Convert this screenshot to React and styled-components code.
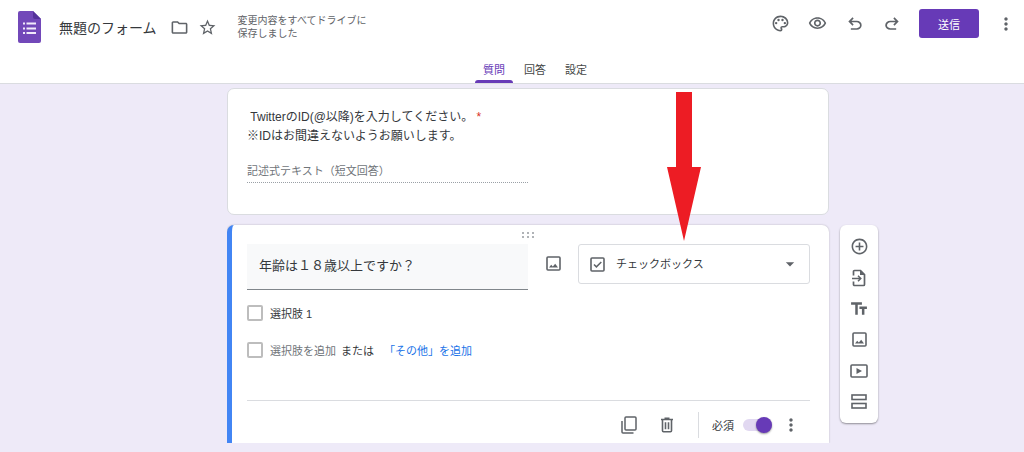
import { useState } from "react"
import styled, { createGlobalStyle } from "styled-components"
import {
    MdAddCircleOutline,
    MdArrowDropDown,
    MdMoreVert,
    MdOutlineFolder,
    MdOutlinePalette,
    MdOutlineVisibility,
    MdStarBorder,
    MdTextFields,
} from "react-icons/md"

const tabs = ["質問", "回答", "設定"]
const questionTypes = ["チェックボックス", "ラジオボタン", "プルダウン", "記述式"]

const UndoIcon = () => (
    <svg width="20" height="20" viewBox="0 -960 960 960" fill="currentColor" aria-hidden="true">
        <path d="M280-200v-80h284q63 0 109.500-40T720-420q0-60-46.500-100T564-560H312l104 104-56 56-200-200 200-200 56 56-104 104h252q97 0 169.500 63T800-420q0 94-72.500 157T564-200H280Z" />
    </svg>
)

const RedoIcon = () => (
    <svg width="20" height="20" viewBox="0 -960 960 960" fill="currentColor" aria-hidden="true">
        <path d="M396-200q-97 0-169.500-63T154-420q0-94 72.500-157T396-640h252L544-744l56-56 200 200-200 200-56-56 104-104H396q-63 0-109.500 40T240-420q0 60 46.500 100T396-280h284v80H396Z" />
    </svg>
)

const FormLogo = () => (
    <svg width="23" height="32" viewBox="0 0 23 32" aria-hidden="true">
        <path d="M2 0h13l8 8v22a2 2 0 0 1-2 2H2a2 2 0 0 1-2-2V2a2 2 0 0 1 2-2z" fill="#7248b9" />
        <path d="M15 0l8 8h-6a2 2 0 0 1-2-2z" fill="#54329a" />
        <path d="M8.500 12.500H18M8.500 17.500H18M8.500 22H18" stroke="#f1ebfb" strokeWidth="2" />
        <path d="M5 12.500h2M5 17.500h2M5 22h2" stroke="#f1ebfb" strokeWidth="2" />
    </svg>
)

const ImageIcon = () => (
    <svg width="15" height="15" viewBox="0 0 15 15" aria-hidden="true">
        <rect x="1" y="1" width="13" height="13" rx="1" fill="none" stroke="currentColor" strokeWidth="1.600" />
        <path d="M3 11.500l2.200-2.800 1.600 1.700 2.400-2.600 2.800 3.700z" fill="currentColor" />
    </svg>
)

const CheckBoxIcon = () => (
    <svg width="15" height="15" viewBox="0 0 15 15" fill="none" stroke="currentColor" aria-hidden="true">
        <rect x="1" y="1" width="13" height="13" rx="1" strokeWidth="1.600" />
        <path d="M4 7.500l2.400 2.400L11.300 5" strokeWidth="1.500" />
    </svg>
)

const ImportIcon = () => (
    <svg width="16" height="18" viewBox="0 0 16 18" fill="none" stroke="currentColor" aria-hidden="true">
        <path d="M2.500 6.500V2.500a1 1 0 0 1 1-1h6l4 4v10a1 1 0 0 1-1 1h-9a1 1 0 0 1-1-1V12.500" strokeWidth="1.700" />
        <path d="M9 1l5 5h-5z" fill="currentColor" stroke="none" />
        <path d="M1 9.500h8.500M7 6.700l2.800 2.800L7 12.300" strokeWidth="1.500" />
    </svg>
)

const VideoIcon = () => (
    <svg width="18" height="14" viewBox="0 0 18 14" aria-hidden="true">
        <rect x="1" y="1" width="16" height="12" rx="1" fill="none" stroke="currentColor" strokeWidth="1.600" />
        <path d="M6.500 4l5.500 3-5.500 3z" fill="currentColor" />
    </svg>
)

const SectionIcon = () => (
    <svg width="16" height="15" viewBox="0 0 16 15" fill="none" stroke="currentColor" strokeWidth="1.600" aria-hidden="true">
        <rect x="1" y="1" width="14" height="4.500" />
        <rect x="1" y="9.500" width="14" height="4.500" />
    </svg>
)

const CopyIcon = () => (
    <svg width="16" height="18" viewBox="0 0 16 18" fill="none" stroke="currentColor" strokeWidth="1.500" aria-hidden="true">
        <rect x="4" y="1" width="11" height="13" rx="1" />
        <path d="M1 5v11a1 1 0 0 0 1 1h10.500" />
    </svg>
)

const TrashIcon = () => (
    <svg width="14" height="16" viewBox="0 0 14 16" fill="none" stroke="currentColor" strokeWidth="1.600" aria-hidden="true">
        <path d="M1 2.500h12M4.500 1.200h5" />
        <path d="M2.500 2.500v11.200a1 1 0 0 0 1 1h7a1 1 0 0 0 1-1V2.500M5.500 5.200v7M8.500 5.200v7" />
    </svg>
)

const DragDots = () => (
    <svg width="13" height="7" viewBox="0 0 13 7" fill="#b0b3b7" aria-hidden="true">
        {[0, 5, 10].map(x => (
            <path key={x} d={`M${x} 0h2v2h-2zM${x} 4h2v2h-2z`} />
        ))}
    </svg>
)

const Header = () => {
    const [active, setActive] = useState(tabs[0])
    return (
        <StyledHeader>
            <TopRow>
                <TitleGroup>
                    <FormLogo />
                    <FormTitle>無題のフォーム</FormTitle>
                    <SmallButton aria-label="フォルダに移動"><MdOutlineFolder size={19} /></SmallButton>
                    <SmallButton aria-label="スターを付ける"><MdStarBorder size={19} /></SmallButton>
                    <SaveStatus>変更内容をすべてドライブに保存しました</SaveStatus>
                </TitleGroup>
                <Actions>
                    <IconButton aria-label="テーマをカスタマイズ"><MdOutlinePalette size={19} /></IconButton>
                    <IconButton aria-label="プレビュー"><MdOutlineVisibility size={19} /></IconButton>
                    <IconButton aria-label="元に戻す"><UndoIcon /></IconButton>
                    <IconButton aria-label="やり直す"><RedoIcon /></IconButton>
                    <SendButton>送信</SendButton>
                    <IconButton aria-label="その他"><MdMoreVert size={20} /></IconButton>
                </Actions>
            </TopRow>
            <TabBar role="tablist">
                {tabs.map(tab => (
                    <Tab key={tab} role="tab" aria-selected={tab === active} onClick={() => setActive(tab)}>
                        {tab}
                    </Tab>
                ))}
            </TabBar>
        </StyledHeader>
    )
}

const TextQuestion = () => (
    <Card>
        <QuestionText htmlFor="twitter-id">
            &nbsp;TwitterのID(@以降)を入力してください。 <Required>*</Required>
            <br />
            ※IDはお間違えないようお願いします。
        </QuestionText>
        <ShortAnswer id="twitter-id" type="text" value="記述式テキスト（短文回答）" readOnly />
    </Card>
)

const CheckboxQuestion = () => {
    const [title, setTitle] = useState("年齢は１８歳以上ですか？")
    const [type, setType] = useState(questionTypes[0])
    const [required, setRequired] = useState(true)
    return (
        <ActiveCard>
            <DragHandle><DragDots /></DragHandle>
            <QuestionRow>
                <TitleInput aria-label="質問" value={title} onChange={e => setTitle(e.target.value)} />
                <ImageButton aria-label="画像を追加"><ImageIcon /></ImageButton>
                <TypeSelect>
                    <CheckBoxIcon />
                    <select aria-label="質問の種類" value={type} onChange={e => setType(e.target.value)}>
                        {questionTypes.map(item => (
                            <option key={item}>{item}</option>
                        ))}
                    </select>
                    <MdArrowDropDown size={20} />
                    <Pointer width="34" height="150" viewBox="0 0 34 150" aria-hidden="true">
                        <path d="M9 1h16v75h9l-17 74-17-74h9z" fill="#ed1c24" />
                    </Pointer>
                </TypeSelect>
            </QuestionRow>
            <Option>
                <input id="option-1" type="checkbox" />
                <label htmlFor="option-1">選択肢 1</label>
            </Option>
            <Option>
                <input type="checkbox" aria-label="新しい選択肢" />
                <AddOption>選択肢を追加</AddOption>
                <span>または</span>
                <AddOther>「その他」を追加</AddOther>
            </Option>
            <CardFooter>
                <IconButton $wide aria-label="コピーを作成"><CopyIcon /></IconButton>
                <IconButton $wide aria-label="削除"><TrashIcon /></IconButton>
                <RequiredToggle>
                    必須
                    <input type="checkbox" role="switch" checked={required} onChange={e => setRequired(e.target.checked)} />
                </RequiredToggle>
                <IconButton $wide aria-label="その他のオプション"><MdMoreVert size={20} /></IconButton>
            </CardFooter>
        </ActiveCard>
    )
}

const SideToolbar = () => (
    <StyledToolbar>
        <button aria-label="質問を追加"><MdAddCircleOutline size={19} /></button>
        <button aria-label="質問をインポート"><ImportIcon /></button>
        <button aria-label="タイトルと説明を追加"><MdTextFields size={20} /></button>
        <button aria-label="画像を追加"><ImageIcon /></button>
        <button aria-label="動画を追加"><VideoIcon /></button>
        <button aria-label="セクションを追加"><SectionIcon /></button>
    </StyledToolbar>
)

const App = () => (
    <>
        <GlobalStyle />
        <Header />
        <Editor>
            <TextQuestion />
            <CheckboxQuestion />
            <SideToolbar />
        </Editor>
    </>
)

export default App

const GlobalStyle = createGlobalStyle`
    * {
        box-sizing: border-box;
    }
    body {
        margin: 0;
        background: #eeeaf8;
        color: #35383c;
        font-family: "Liberation Sans", "Noto Sans CJK JP", sans-serif;
        font-size: 11px;
    }
    button, input, select {
        font: inherit;
        color: inherit;
    }
    button {
        padding: 0;
        border: none;
        background: none;
        cursor: pointer;
    }
    svg {
        display: block;
        flex-shrink: 0;
    }
`

const StyledHeader = styled.header`
    background: #fff;
    border-bottom: 1px solid #dadce0;
`

const TopRow = styled.div`
    display: flex;
    justify-content: space-between;
    align-items: flex-start;
    height: 54px;
`

const TitleGroup = styled.div`
    display: flex;
    align-items: center;
    height: 54px;
    padding-left: 18px;
`

const FormTitle = styled.h1`
    margin: 0 9px 0 18px;
    font-size: 14px;
    font-weight: 400;
    white-space: nowrap;
`

const SmallButton = styled.button`
    display: grid;
    place-items: center;
    width: 28px;
    height: 28px;
    color: #5f6368;
`

const SaveStatus = styled.p`
    width: 132px;
    margin: 0 0 0 16px;
    font-size: 10px;
    line-height: 13px;
    color: #5f6368;
`

const Actions = styled.div`
    display: flex;
    align-items: center;
    height: 47px;
`

const IconButton = styled.button`
    display: grid;
    place-items: center;
    width: ${props => props.$wide ? "38px" : "37px"};
    height: 36px;
    color: #5f6368;
`

const SendButton = styled.button`
    width: 60px;
    height: 29px;
    margin: 0 8px 0 9px;
    border-radius: 3px;
    background: #673ab7;
    color: #fff;
`

const TabBar = styled.div`
    display: flex;
    justify-content: center;
    gap: 3px;
    height: 29px;
    padding-left: 46px;
`

const Tab = styled.button`
    position: relative;
    padding: 0 8px;
    color: #444746;
    &[aria-selected="true"] {
        color: #673ab7;
    }
    &[aria-selected="true"]::after {
        content: '';
        position: absolute;
        inset: auto 0 0;
        height: 3px;
        border-radius: 3px 3px 0 0;
        background: #673ab7;
    }
`

const Editor = styled.main`
    display: grid;
    grid-template-columns: minmax(0, 602px) 38px;
    justify-content: center;
    gap: 10px 11px;
    padding: 4px 0 9px 81px;
`

const Card = styled.section`
    padding: 19px 19px 31px;
    border: 1px solid #dadce0;
    border-radius: 7px;
    background: #fff;
`

const QuestionText = styled.label`
    display: block;
    font-size: 12px;
    line-height: 19px;
`

const Required = styled.span`
    color: #d93025;
`

const ShortAnswer = styled.input`
    display: block;
    width: 50%;
    height: 22px;
    margin-top: 15px;
    padding: 0 0 4px;
    border: none;
    border-bottom: 1px dotted #9aa0a6;
    background: none;
    color: #70757a;
`

const ActiveCard = styled.section`
    grid-column: 1;
    padding: 0 19px 0 15px;
    border-left: 5px solid #4285f4;
    border-radius: 7px 7px 0 0;
    background: #fff;
    box-shadow: 0 0 2px rgba(0, 0, 0, 0.25);
    clip-path: inset(-150px -3px 0 0);
`

const DragHandle = styled.div`
    display: flex;
    justify-content: center;
    height: 19px;
    padding-top: 7px;
`

const QuestionRow = styled.div`
    display: flex;
    align-items: flex-start;
    margin-bottom: 4px;
`

const TitleInput = styled.input`
    flex: 1;
    min-width: 0;
    height: 46px;
    padding: 0 12px 4px;
    border: none;
    border-bottom: 1px solid #80868b;
    background: #f8f9fa;
    font-size: 13px;
`

const ImageButton = styled.button`
    display: grid;
    place-items: center;
    width: 50px;
    height: 38px;
    color: #5f6368;
`

const TypeSelect = styled.div`
    position: relative;
    display: flex;
    align-items: center;
    width: 232px;
    height: 40px;
    padding: 0 9px 0 11px;
    border: 1px solid #dadce0;
    border-radius: 3px;
    color: #5f6368;
    select {
        flex: 1;
        min-width: 0;
        height: 100%;
        padding: 0 0 0 11px;
        border: none;
        appearance: none;
        background: none;
        color: #35383c;
    }
`

const Pointer = styled.svg`
    position: absolute;
    left: 88px;
    bottom: calc(100% + 4px);
    pointer-events: none;
`

const Option = styled.div`
    display: flex;
    align-items: center;
    gap: 5px;
    height: 37px;
    input {
        appearance: none;
        width: 16px;
        height: 16px;
        margin: 0 2px 0 0;
        border: 2px solid #bdbdbd;
        border-radius: 2px;
    }
    input:checked {
        background: #673ab7;
    }
`

const AddOption = styled.button`
    color: #70757a;
`

const AddOther = styled.button`
    margin-left: 5px;
    color: #1a73e8;
`

const CardFooter = styled.footer`
    display: flex;
    justify-content: flex-end;
    align-items: center;
    margin-top: 32px;
    padding-top: 6px;
    border-top: 1px solid #dadce0;
`

const RequiredToggle = styled.label`
    display: flex;
    align-items: center;
    gap: 9px;
    height: 26px;
    margin-left: 12px;
    padding-left: 13px;
    border-left: 1px solid #dadce0;
    input {
        appearance: none;
        display: flex;
        align-items: center;
        width: 29px;
        height: 12px;
        margin: 0;
        border-radius: 6px;
        background: #e1d8f1;
    }
    input::before {
        content: '';
        width: 16px;
        height: 16px;
        border-radius: 50%;
        background: #fff;
        box-shadow: 0 1px 2px rgba(0, 0, 0, 0.4);
    }
    input:checked::before {
        margin-left: auto;
        background: #673ab7;
    }
`

const StyledToolbar = styled.aside`
    align-self: start;
    display: flex;
    flex-direction: column;
    padding: 6px 0;
    border-radius: 6px;
    background: #fff;
    box-shadow: 0 1px 2px rgba(0, 0, 0, 0.4);
    button {
        display: grid;
        place-items: center;
        height: 31px;
        color: #5f6368;
    }
`
